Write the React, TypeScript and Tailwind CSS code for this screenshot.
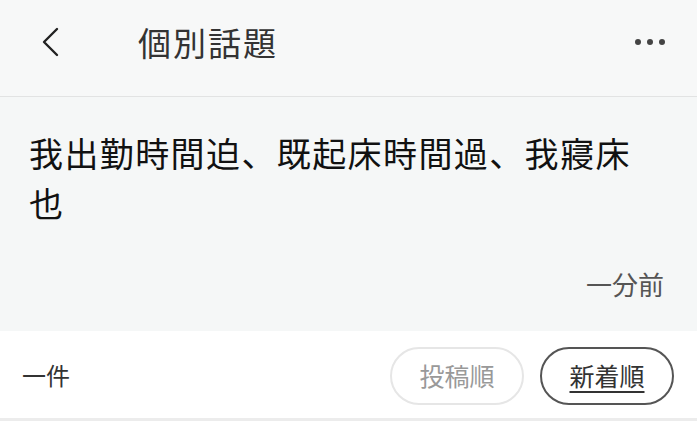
const cjk = "font-['Noto_Sans_CJK_JP','Noto_Sans_CJK_TC',sans-serif]";

function App() {
  return (
    <div className={`w-[697px] h-[425px] overflow-hidden bg-white flex flex-col ${cjk}`}>
      {/* Header */}
      <div className="h-[97px] shrink-0 bg-[#f7f8f8] border-b border-[#e2e3e3] flex items-center pl-[38px] pr-[32px]">
        <svg width="24" height="30" viewBox="0 0 24 30" className="mt-[-12px]">
          <path d="M19 2 L6 15 L19 28" fill="none" stroke="#222" strokeWidth="2.4" strokeLinecap="round" strokeLinejoin="round" />
        </svg>
        <h1 className="ml-[76px] mt-[-12px] text-[33px] leading-none text-[#333] tracking-[2px]">個別話題</h1>
        <div className="ml-auto mt-[-12px] flex gap-[6px]">
          <span className="w-[6px] h-[6px] rounded-full bg-[#444]"></span>
          <span className="w-[6px] h-[6px] rounded-full bg-[#444]"></span>
          <span className="w-[6px] h-[6px] rounded-full bg-[#444]"></span>
        </div>
      </div>

      {/* Post */}
      <div className="h-[234px] shrink-0 bg-[#f5f7f7] px-[29px] pt-[31px] flex flex-col">
        <p className="max-w-[620px] text-[34px] leading-[50px] font-normal text-[#111] tracking-[1.4px]">
          我出勤時間迫、既起床時間過、我寢床也
        </p>
        <div className="mt-auto mb-[34px] pr-[4px] text-right text-[26px] leading-none text-[#555]">一分前</div>
      </div>

      {/* Sort bar */}
      <div className="h-[90px] shrink-0 bg-white border-b-[3px] border-[#ececec] flex items-center pl-[22px] pr-[23px]">
        <span className="text-[24px] text-[#333]">一件</span>
        <div className="ml-auto mt-[2px] flex gap-[16px]">
          <button className="w-[134px] h-[58px] rounded-full border-2 border-[#e6e6e6] text-[25px] text-[#999]">投稿順</button>
          <button className="w-[134px] h-[58px] rounded-full border-2 border-[#555] text-[25px] text-[#333] underline underline-offset-[5px]">新着順</button>
        </div>
      </div>
    </div>
  );
}

export default App;
